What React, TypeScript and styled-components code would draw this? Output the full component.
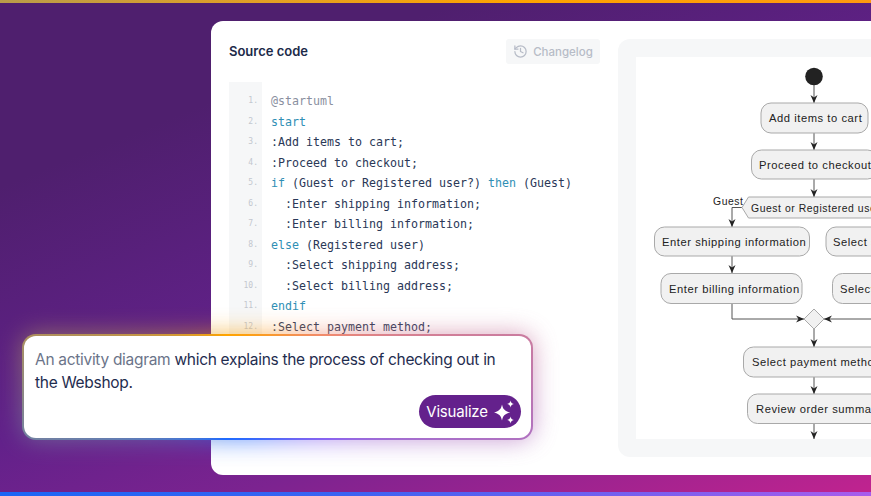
import React from "react";
import styled, { createGlobalStyle } from "styled-components";
import { History } from "lucide-react";

const GlobalStyle = createGlobalStyle`
  html, body {
    margin: 0;
    padding: 0;
    background: #4f1f6f;
    font-family: "Inter", "Liberation Sans", sans-serif;
  }
`;

const Stage = styled.div`
  position: relative;
  width: 871px;
  height: 496px;
  overflow: hidden;
  display: flex;
  flex-direction: column;
  background: linear-gradient(158deg, #4f1f6e 0%, #4f1f6e 22%, #62218a 52%, #7c2390 70%, #c1238f 100%);
`;

const TopBar = styled.div`
  height: 3px;
  flex-shrink: 0;
  background: linear-gradient(90deg, #b99c4a 0%, #e2a024 30%, #ffa400 60%, #ff9a10 100%);
`;

const BottomBar = styled.div`
  height: 4px;
  flex-shrink: 0;
  background: linear-gradient(90deg, #1b66f5 0%, #3b63f2 40%, #a85cec 100%);
`;

const Main = styled.div`
  flex: 1;
  display: flex;
  padding: 18px 0 17px 211px;
  min-height: 0;
`;

const Card = styled.div`
  flex-shrink: 0;
  width: 720px;
  display: flex;
  gap: 18px;
  padding: 18px;
  box-sizing: border-box;
  background: #fff;
  border-radius: 12px 0 0 12px;
`;

const SourceColumn = styled.div`
  width: 371px;
  flex-shrink: 0;
  display: flex;
  flex-direction: column;
`;

const Header = styled.div`
  height: 43px;
  display: flex;
  align-items: flex-start;
  justify-content: space-between;
`;

const Title = styled.h2`
  margin: 0;
  height: 25px;
  line-height: 25px;
  font-size: 13px;
  font-weight: 600;
  color: #1c2a49;
`;

const ChangelogButton = styled.button`
  width: 94px;
  height: 25px;
  padding: 0;
  border: 0;
  border-radius: 3px;
  display: flex;
  align-items: center;
  justify-content: center;
  gap: 5px;
  font-family: inherit;
  font-size: 11.5px;
  font-weight: 500;
  color: #b7bcc7;
  background: #f6f7f8;
`;

const CodeBlock = styled.div`
  height: 262px;
  overflow: hidden;
  display: flex;
  font-family: "DejaVu Sans Mono", "Liberation Mono", monospace;
`;

const Gutter = styled.div`
  width: 33px;
  flex-shrink: 0;
  padding: 9px 4px 0 0;
  box-sizing: border-box;
  background: #f6f7f8;
  text-align: right;
  font-size: 8px;
  color: #c3c7cf;
`;

const LineNumber = styled.div`
  height: 20.55px;
  line-height: 20.55px;
`;

const CodeText = styled.div`
  padding: 9px 0 0 9px;
`;

const CodeLine = styled.div<{ $tone?: "comment" }>`
  height: 20.55px;
  line-height: 20.55px;
  font-size: 11.63px;
  white-space: pre;
  color: ${(p) => (p.$tone === "comment" ? "#8a90a0" : "#2a3857")};
`;

const Keyword = styled.span`
  color: #2f8fb5;
`;

const DiagramPanel = styled.div`
  flex-shrink: 0;
  width: 300px;
  padding: 18px;
  box-sizing: border-box;
  border-radius: 12px 0 0 12px;
  background: #f6f7f8;
`;

const DiagramSheet = styled.div`
  height: 100%;
  overflow: hidden;
  background: #fff;
`;

const PromptGlow = styled.div`
  position: absolute;
  left: 22px;
  top: 334px;
  width: 511px;
  height: 106px;
  border-radius: 14px;
  background: conic-gradient(from 315deg, #ffa400 0deg, #f08a70 90deg, #8a63f0 180deg, #1f6bff 270deg, #ffa400 360deg);
  filter: blur(12px);
  opacity: 0.7;
`;

const PromptCard = styled.div`
  position: absolute;
  left: 22px;
  top: 334px;
  width: 511px;
  height: 106px;
  box-sizing: border-box;
  padding: 12px 11px 11px 11px;
  border: 2px solid transparent;
  border-radius: 14px;
  display: flex;
  flex-direction: column;
  background:
    linear-gradient(#fff, #fff) padding-box,
    conic-gradient(from 315deg, #ffa400 0deg, #f08a70 90deg, #8a63f0 180deg, #1f6bff 270deg, #ffa400 360deg) border-box;
`;

const PromptText = styled.p`
  margin: 0;
  font-size: 15.5px;
  line-height: 23px;
  letter-spacing: -0.3px;
  color: #1f2d4f;
`;

const Placeholder = styled.span`
  color: #6b7489;
`;

const VisualizeButton = styled.button`
  position: absolute;
  right: 10px;
  bottom: 10px;
  width: 102px;
  height: 33px;
  padding: 0 0 0 2px;
  border: 0;
  border-radius: 17px;
  display: flex;
  align-items: center;
  justify-content: center;
  gap: 4px;
  font-family: inherit;
  font-size: 15px;
  letter-spacing: -0.2px;
  color: #fff;
  background: #64218c;
`;

const Sparkles = () => (
  <svg width="24" height="24" viewBox="0 0 24 24" fill="#fff">
    <path d="M10 4.5c.9 4.6 2.6 6.4 8 8-5.4 1.6-7.1 3.4-8 8-.9-4.6-2.6-6.4-8-8 5.4-1.6 7.100-3.400 8-8z" />
    <path d="M18.500 .5c.4 2 1.100 2.800 3.300 3.500-2.200.7-2.900 1.500-3.300 3.500-.4-2-1.100-2.800-3.300-3.500 2.200-.7 2.900-1.500 3.300-3.500z" />
    <path d="M18.500 16.500c.4 2 1.100 2.800 3.300 3.500-2.200.7-2.900 1.500-3.300 3.500-.4-2-1.100-2.800-3.300-3.500 2.200-.7 2.900-1.500 3.300-3.500z" />
  </svg>
);

const codeLines: React.ReactNode[] = [
  "@startuml",
  <Keyword>start</Keyword>,
  ":Add items to cart;",
  ":Proceed to checkout;",
  <>
    <Keyword>if</Keyword> (Guest or Registered user?) <Keyword>then</Keyword> (Guest)
  </>,
  "  :Enter shipping information;",
  "  :Enter billing information;",
  <>
    <Keyword>else</Keyword> (Registered user)
  </>,
  "  :Select shipping address;",
  "  :Select billing address;",
  <Keyword>endif</Keyword>,
  ":Select payment method;",
];

const Node = styled.rect`
  fill: #f1f1f1;
  stroke: #a9a9a9;
  stroke-width: 1;
`;

const NodeLabel = styled.text`
  font-family: "Liberation Sans", sans-serif;
  font-size: 11.2px;
  letter-spacing: 0.55px;
  fill: #222;
`;

const Edge = styled.path`
  fill: none;
  stroke: #555;
  stroke-width: 1;
`;

const Head = ({ x, y, dir = "down" }: { x: number; y: number; dir?: "down" | "left" | "right" }) => {
  const d =
    dir === "down"
      ? `M${x - 3.5} ${y - 8}L${x} ${y - 5.500}L${x + 3.5} ${y - 8}L${x} ${y}Z`
      : dir === "right"
        ? `M${x - 8} ${y - 3.5}L${x - 5.500} ${y}L${x - 8} ${y + 3.5}L${x} ${y}Z`
        : `M${x + 8} ${y - 3.5}L${x + 5.500} ${y}L${x + 8} ${y + 3.5}L${x} ${y}Z`;
  return <path d={d} fill="#222" />;
};

const boxes = [
  { x: 761, y: 103, w: 107, h: 30, label: "Add items to cart", tx: 769 },
  { x: 751.500, y: 150, w: 126, h: 29, label: "Proceed to checkout", tx: 759 },
  { x: 654.500, y: 227, w: 155, h: 29, label: "Enter shipping information", tx: 662 },
  { x: 826, y: 227, w: 120, h: 29, label: "Select shipping address", tx: 833 },
  { x: 661, y: 273.500, w: 141, h: 30, label: "Enter billing information", tx: 669 },
  { x: 832.500, y: 273.500, w: 120, h: 30, label: "Select billing address", tx: 840 },
  { x: 743.500, y: 347, w: 150, h: 30, label: "Select payment method", tx: 752 },
  { x: 747.500, y: 394, w: 140, h: 29.500, label: "Review order summary", tx: 756 },
];

const ActivityDiagram = () => (
  <svg width="235" height="382" viewBox="636 57 235 382" style={{ display: "block" }}>
    <circle cx="814" cy="76.500" r="8.800" fill="#222" />
    <Edge d="M814 85V103M814 133V150M814 179V197M742 207.500H732V227M732 256V273M732 303.500V319H805M871 319H824M814 329V347M814 377V394M814 423.500V439" />
    <Head x={814} y={103} />
    <Head x={814} y={150} />
    <Head x={814} y={197} />
    <Head x={732} y={227} />
    <Head x={732} y={273} />
    <Head x={804} y={319} dir="right" />
    <Head x={824} y={319} dir="left" />
    <Head x={814} y={347} />
    <Head x={814} y={394} />
    <Head x={814} y={439} />
    {boxes.map((b) => (
      <g key={b.label}>
        <Node x={b.x} y={b.y} width={b.w} height={b.h} rx={10} />
        <NodeLabel x={b.tx} y={b.y + b.h / 2 + 4}>
          {b.label}
        </NodeLabel>
      </g>
    ))}
    <path d="M742 207.500L748.500 197H890V218H748.500Z" fill="#f1f1f1" stroke="#a9a9a9" />
    <NodeLabel x={751} y={211.500} style={{ fontSize: 10.400 }}>
      Guest or Registered user?
    </NodeLabel>
    <NodeLabel x={713} y={205} style={{ fontSize: 10.400 }}>
      Guest
    </NodeLabel>
    <path d="M814 309L824 319L814 329L804 319Z" fill="#f1f1f1" stroke="#a9a9a9" />
  </svg>
);

export default function App() {
  return (
    <>
      <GlobalStyle />
      <Stage>
        <TopBar />
        <Main>
          <Card>
            <SourceColumn>
              <Header>
                <Title>Source code</Title>
                <ChangelogButton>
                  <History size={15} strokeWidth={2} />
                  Changelog
                </ChangelogButton>
              </Header>
              <CodeBlock>
                <Gutter>
                  {codeLines.map((_, i) => (
                    <LineNumber key={i}>{i + 1}.</LineNumber>
                  ))}
                </Gutter>
                <CodeText>
                  {codeLines.map((line, i) => (
                    <CodeLine key={i} $tone={i === 0 ? "comment" : undefined}>
                      {line}
                    </CodeLine>
                  ))}
                </CodeText>
              </CodeBlock>
            </SourceColumn>
            <DiagramPanel>
              <DiagramSheet>
                <ActivityDiagram />
              </DiagramSheet>
            </DiagramPanel>
          </Card>
        </Main>
        <BottomBar />
        <PromptGlow />
        <PromptCard>
          <PromptText>
            <Placeholder>An activity diagram</Placeholder> which explains the process of checking out in the Webshop.
          </PromptText>
          <VisualizeButton>
            Visualize
            <Sparkles />
          </VisualizeButton>
        </PromptCard>
      </Stage>
    </>
  );
}
